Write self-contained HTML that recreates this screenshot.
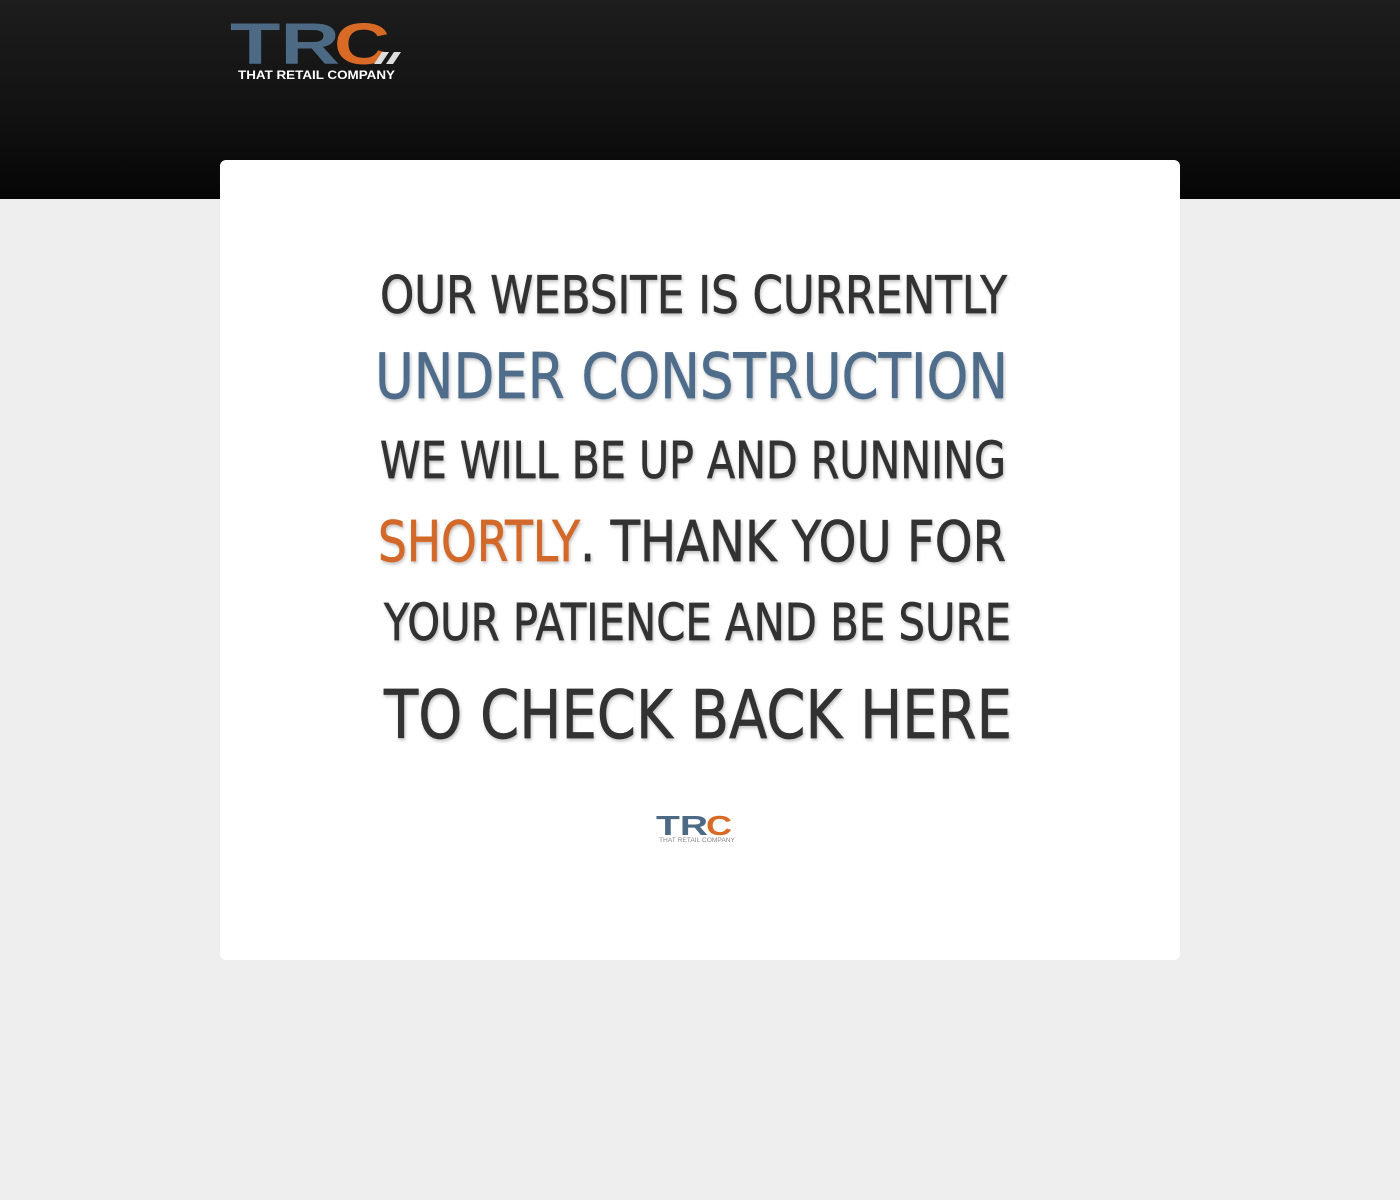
<!DOCTYPE html>
<html><head><meta charset="utf-8"><style>
body{margin:0;width:1400px;height:1200px;background:#eeeeee;position:relative;overflow:hidden;font-family:"Liberation Sans",sans-serif}
.hdr{position:absolute;left:0;top:0;width:1400px;height:199px;background:linear-gradient(#1d1d1d,#111 60%,#050505)}
.card{position:absolute;left:220px;top:160px;width:960px;height:800px;background:#fff;border-radius:6px}
svg text{font-family:"Liberation Sans",sans-serif}
.m text{font-family:"DejaVu Sans","Liberation Sans",sans-serif;stroke-width:0.7}
</style></head><body>
<div class="hdr"></div>
<svg style="position:absolute;left:228px;top:14px" width="180" height="72">
<text x="2" y="50" font-size="58" font-weight="bold" fill="#4d6a85" textLength="110" lengthAdjust="spacingAndGlyphs">TR</text>
<text x="106" y="50" font-size="58" font-weight="bold" fill="#d86a26" textLength="56" lengthAdjust="spacingAndGlyphs">C</text>
<polygon points="146,50 154,38 161,38 153,50" fill="#ddd"/><polygon points="158,50 166,38 173,38 165,50" fill="#ddd"/>
<text x="10" y="65" font-size="12" font-weight="bold" fill="#fff" textLength="157" lengthAdjust="spacingAndGlyphs">THAT RETAIL COMPANY</text>
</svg>
<div class="card"></div>
<svg style="position:absolute;left:0;top:0" width="1400" height="1200">
<defs><filter id="s"><feDropShadow dx="1" dy="2" stdDeviation="1.5" flood-color="#000" flood-opacity="0.25"/></filter></defs>
<g filter="url(#s)" class="m">
<text x="380" y="313" font-size="52" fill="#333" stroke="#333" textLength="627" lengthAdjust="spacingAndGlyphs">OUR WEBSITE IS CURRENTLY</text>
<text x="375" y="398" font-size="62" fill="#4f6d8a" stroke="#4f6d8a" textLength="633" lengthAdjust="spacingAndGlyphs">UNDER CONSTRUCTION</text>
<text x="380" y="478" font-size="51" fill="#333" stroke="#333" textLength="626" lengthAdjust="spacingAndGlyphs">WE WILL BE UP AND RUNNING</text>
<text x="378" y="561" font-size="56" fill="#d2692a" stroke="#d2692a" textLength="202" lengthAdjust="spacingAndGlyphs">SHORTLY</text>
<text x="580" y="561" font-size="56" fill="#333" stroke="#333" textLength="426" lengthAdjust="spacingAndGlyphs">. THANK YOU FOR</text>
<text x="384" y="640" font-size="51" fill="#333" stroke="#333" textLength="627" lengthAdjust="spacingAndGlyphs">YOUR PATIENCE AND BE SURE</text>
<text x="384" y="738" font-size="67" fill="#333" stroke="#333" textLength="628" lengthAdjust="spacingAndGlyphs">TO CHECK BACK HERE</text>
</g>
<text x="656" y="835" font-size="28" font-weight="bold" fill="#4d6a85" textLength="52" lengthAdjust="spacingAndGlyphs">TR</text>
<text x="706" y="835" font-size="28" font-weight="bold" fill="#d86a26" textLength="26" lengthAdjust="spacingAndGlyphs">C</text>
<text x="659" y="842" font-size="6" fill="#888" textLength="76" lengthAdjust="spacingAndGlyphs">THAT RETAIL COMPANY</text>
</svg>
</body></html>
